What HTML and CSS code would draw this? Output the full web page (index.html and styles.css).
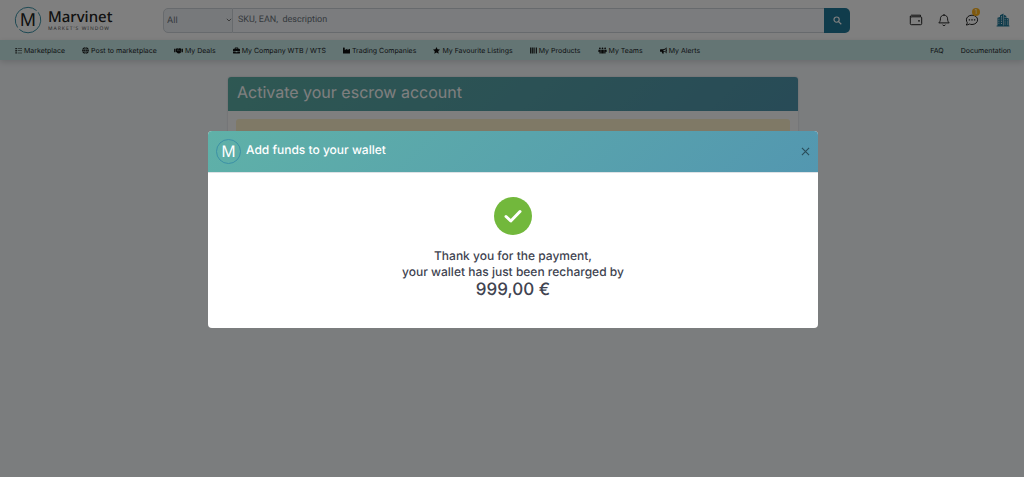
FILE: index.html
```html
<!DOCTYPE html>
<html lang="en">
<head>
<meta charset="utf-8">
<meta name="viewport" content="width=device-width, initial-scale=1">
<title>Marvinet</title>
<link rel="stylesheet" href="styles.css">
</head>
<body>
<header class="topbar">
  <a class="brand" href="#">
    <span class="brand-mark"><svg viewBox="0 0 28 28" aria-hidden="true"><path d="M3.6 21.5A12.8 12.8 0 0 1 22.6 4.6M24.2 6.3A12.8 12.8 0 0 1 5.4 23.5"/></svg><span class="brand-letter">M</span></span>
    <span class="brand-text"><span class="brand-name">Marvinet</span><span class="brand-tag">MARKET'S WINDOW</span></span>
  </a>
  <form class="search">
    <span class="search-scope">
      <select class="search-select" aria-label="Category"><option>All</option></select>
      <svg class="chevron" viewBox="0 0 8 8" aria-hidden="true"><path d="M1.8 2.8 4 5l2.2-2.2"/></svg>
    </span>
    <input class="search-input" type="text" aria-label="Search" placeholder="SKU, EAN,&nbsp; description">
    <button class="search-button" type="button" aria-label="Search"><svg viewBox="0 0 10 10"><circle cx="4" cy="4" r="2.9"/><path d="m6.2 6.2 3 3"/></svg></button>
  </form>
  <div class="tools">
    <button class="tool" type="button" aria-label="Wallet"><svg viewBox="0 0 14 14"><path d="M11.5 3.6V2.2H2.4a1.1 1.1 0 0 0 0 2M1.3 3v7.7c0 .6.4 1 1 1h9.4c.6 0 1-.4 1-1V4.8c0-.6-.4-1-1-1H2.4"/><circle class="solid" cx="10" cy="7.8" r=".9"/></svg></button>
    <button class="tool" type="button" aria-label="Notifications"><svg viewBox="0 0 14 14"><path d="M7 1v1.2M7 2.2c-2.3 0-3.6 1.6-3.6 3.6 0 2.5-.8 3.2-1.6 4.1h10.4c-.8-.9-1.6-1.6-1.6-4.1 0-2-1.3-3.6-3.6-3.6zM5.6 11.7c.4 1.2 2.4 1.2 2.8 0"/></svg></button>
    <button class="tool" type="button" aria-label="Messages"><svg viewBox="0 0 14 14"><path d="M7 2.200c3.100 0 5.600 2 5.600 4.600s-2.500 4.700-5.600 4.700c-.9 0-1.800-.2-2.600-.5-.9.6-1.900 1-3.200 1 .6-.7 1.100-1.600 1.100-2.300C1.700 8.900 1.400 7.900 1.400 6.800 1.400 4.200 3.900 2.200 7 2.200z"/><path class="solid" d="M3.700 6.200h1.400v1.300H3.700zM6.300 6.200h1.400v1.300H6.300zM8.900 6.200h1.400v1.300H8.900z"/></svg><span class="badge">1</span></button>
    <button class="tool tool-company" type="button" aria-label="Company"><svg viewBox="0 0 14 14"><path class="solid" fill-rule="evenodd" d="M1 12.600h.5V4.800l2.500-.9V2.300L7.500.6v12H8V1.700l2.300 1.200v1.900l2.500.6v7.200h.6v.9H.6v-.9zM2.500 5.800v1h.8v-1zm0 2v1h.8v-1zm0 2v1h.8v-1zM5 3.300v1.100h.9V3.300zm0 2.200v1.100h.9V5.500zm0 2.200v1.100h.9V7.700zm0 2.200V11h.9V9.900zM8.700 4v1h.8V4zm0 2.200v1h.8v-1zm0 2.200v1h.8v-1zm0 2.200v1h.8v-1zM11 6.200v1h.8v-1zm0 2.200v1h.8v-1zm0 2.200v1h.8v-1z"/></svg></button>
  </div>
</header>
<nav class="menu">
  <a href="#"><svg class="ic" viewBox="0 0 16 16"><path d="M1 2h3v3H1zM1 7h3v3H1zM1 12h3v3H1zM6 3h10v1H6zM6 8h10v1H6zM6 13h10v1H6z"/></svg>Marketplace</a>
  <a href="#"><svg class="ic" viewBox="0 0 16 16"><circle cx="8" cy="8" r="7.500"/><path class="cut" d="M.5 5.500h15M.5 10.500h15M8 .5v15M8 .5c-5 4-5 11 0 15M8 .5c5 4 5 11 0 15"/></svg>Post to marketplace</a>
  <a href="#"><svg class="ic ic-wide" viewBox="0 0 20 16"><path d="M0 4h3v8H0zM17 4h3v8h-3zM4 4l3-1 3 1-3 3c1 2 3 1 4 0l5 4-1 2-2 1-2 1-3-1-4-3H4zM11 3h3l2 1v6l-5-4-2 1-1-1z"/></svg>My Deals</a>
  <a href="#"><svg class="ic" viewBox="0 0 16 16"><path fill-rule="evenodd" d="M4 4V2q0-1 1-1h6q1 0 1 1v2h2q2 0 2 2v3H0V6q0-2 2-2zm2 0h4V3H6zM0 10h6v2h4v-2h6v3q0 2-2 2H2q-2 0-2-2z"/></svg>My Company WTB / WTS</a>
  <a href="#"><svg class="ic" viewBox="0 0 16 16"><path d="M0 2q0-1 1-1h2q1 0 1 1v5l6-3v3l6-3v10q0 1-1 1H1q-1 0-1-1z"/></svg>Trading Companies</a>
  <a href="#"><svg class="ic" viewBox="0 0 16 16"><path d="m8 0 2.400 5 5.600.8-4 4 1 5.700-5-2.700-5 2.700 1-5.700-4-4L5.600 5z"/></svg>My Favourite Listings</a>
  <a href="#"><svg class="ic" viewBox="0 0 16 16"><path d="M0 1h2v14H0zM3 1h1v14H3zM5 1h2v14H5zM8 1h1v14H8zM10 1h2v14h-2zM14 1h2v14h-2z"/></svg>My Products</a>
  <a href="#"><svg class="ic ic-wide" viewBox="0 0 20 16"><circle cx="4" cy="3" r="2"/><circle cx="10" cy="3" r="2"/><circle cx="16" cy="3" r="2"/><path d="M1 6h5v9H3v-4H0zM7 6h6v9H7zM14 6h5l1 5h-3v4h-3z"/></svg>My Teams</a>
  <a href="#"><svg class="ic" viewBox="0 0 16 16"><path fill-rule="evenodd" d="M1 5h6c3 0 6-2 7-4h1v5q2 1 0 3v5h-1c-1-2-3-3-6-3l1 4H5l-1-4H1q-1 0-1-1V6q0-1 1-1zm7 2v2c2 0 4 1 5 2V4c-1 2-3 3-5 3z"/></svg>My Alerts</a>
  <span class="menu-end"><a href="#">FAQ</a><a href="#">Documentation</a></span>
</nav>
<main class="page">
  <section class="card">
    <h1 class="card-title">Activate your escrow account</h1>
    <div class="card-body"><div class="notice"></div></div>
  </section>
</main>
<div class="backdrop">
  <div class="modal" role="dialog" aria-modal="true" aria-labelledby="modal-title">
    <div class="modal-head">
      <span class="modal-mark">M</span>
      <h2 class="modal-title" id="modal-title">Add funds to your wallet</h2>
      <button class="close" type="button" aria-label="Close"><svg viewBox="0 0 10 10"><path d="m1 1 8 8M9 1 1 9"/></svg></button>
    </div>
    <div class="modal-body">
      <svg class="check" viewBox="0 0 38 38" aria-hidden="true"><circle cx="19" cy="19" r="19"/><path d="m12 19.500 4.800 4.500 9.200-9.500"/></svg>
      <p class="message">Thank you for the payment,<br>your wallet has just been recharged by</p>
      <p class="amount">999,00 €</p>
    </div>
  </div>
</div>
</body>
</html>
```
FILE: styles.css
```css
* { box-sizing: border-box; }
body {
  margin: 0;
  min-height: 100vh;
  background: #f7fafd;
  color: #212529;
  font-family: Inter, "Liberation Sans", sans-serif;
  font-size: 7px;
  text-rendering: geometricPrecision;
}
h1, h2, p { margin: 0; font-weight: 500; }
a { color: inherit; text-decoration: none; }
button { border: 0; padding: 0; background: none; color: inherit; font: inherit; }
svg { display: block; }

.topbar {
  display: flex;
  align-items: center;
  height: 40px;
  padding: 0 14px;
  background: #fff;
}
.brand { display: flex; align-items: center; gap: 6px; width: 149px; }
.brand-mark { display: grid; place-items: center; width: 28px; height: 28px; }
.brand-mark > * { grid-area: 1 / 1; }
.brand-mark svg { width: 28px; height: 28px; fill: none; stroke: #3c93a8; stroke-width: 1; }
.brand-letter { font-family: "Noto Sans", sans-serif; font-size: 18px; line-height: 28px; color: #222; }
.brand-text { display: flex; flex-direction: column; }
.brand-name { font-family: "Noto Sans", sans-serif; font-size: 15px; font-weight: 500; line-height: 18px; color: #222; }
.brand-tag { font-family: "Noto Sans", sans-serif; font-size: 5px; line-height: 6px; letter-spacing: 1px; color: #555; white-space: nowrap; }

.search { display: flex; flex: 1; height: 25px; }
.search-scope { display: grid; width: 70px; }
.search-scope > * { grid-area: 1 / 1; }
.search-select {
  appearance: none;
  padding: 0 3px;
  border: 1px solid #ced4da;
  border-radius: 5px 0 0 5px;
  background: #eff2f6;
  color: #6c757d;
  font: 9px Inter, sans-serif;
  text-rendering: inherit;
}
.chevron { justify-self: end; align-self: center; width: 8px; height: 8px; fill: none; stroke: #777; pointer-events: none; }
.search-input {
  flex: 1;
  min-width: 0;
  padding: 0 5px;
  border: solid #ced4da;
  border-width: 1px 0;
  background: #f7f9fd;
  font: 9px Roboto, sans-serif;
  text-rendering: inherit;
}
.search-input::placeholder { color: #6c757d; opacity: 1; }
.search-button { display: grid; place-items: center; width: 26px; border-radius: 0 5px 5px 0; background: #217998; }
.search-button svg { width: 9px; height: 9px; fill: none; stroke: #fff; stroke-width: 1.300; }
.tools { display: flex; gap: 14px; padding-left: 59px; }
.tool { position: relative; width: 14px; height: 14px; }
.tool svg { width: 14px; height: 14px; fill: none; stroke: #222; stroke-linejoin: round; }
.tool .solid { fill: #222; stroke: none; }
.tool-company { margin-left: 3px; }
.tool-company .solid { fill: #217998; }
.badge {
  position: absolute;
  top: -5px;
  right: -1px;
  width: 8px;
  height: 8px;
  border-radius: 50%;
  background: #ffb31a;
  color: #fff;
  font-size: 6px;
  line-height: 8px;
  text-align: center;
}

.menu {
  display: flex;
  align-items: center;
  gap: 17px;
  height: 20px;
  padding: 0 13px 0 15px;
  background: #c9ebe8;
  box-shadow: 0 2px 6px rgba(0, 0, 0, .15);
  white-space: nowrap;
}
.menu a { display: flex; align-items: center; gap: 2px; }
.ic { width: 7px; height: 7px; fill: #111; }
.ic-wide { width: 9px; }
.cut { fill: none; stroke: #c9ebe8; stroke-width: 1; }
.menu-end { display: flex; gap: 17px; margin-left: auto; }

.page { padding: 17px 16px 16px 18px; }
.card { max-width: 570px; margin: 0 auto; border-radius: 3px; background: #fff; box-shadow: 0 0 2px rgba(0, 0, 0, .2); }
.card-title {
  padding: 0 9px 4px;
  border-radius: 3px 3px 0 0;
  background: linear-gradient(135deg, #5db0a6, #5096ae);
  color: #fff;
  font-size: 16px;
  font-weight: 400;
  line-height: 30px;
}
.card-body { padding: 8px; }
.notice { height: 48px; border-radius: 3px; background: #fff3cd; }

.backdrop {
  position: fixed;
  inset: 0;
  display: flex;
  align-items: flex-start;
  justify-content: center;
  padding: 131px 16px 16px 18px;
  background: rgba(0, 0, 0, .5);
}
.modal { width: 100%; max-width: 610px; border-radius: 4px; overflow: hidden; background: #fff; }
.modal-head {
  display: flex;
  align-items: center;
  gap: 5px;
  padding: 8px;
  border-bottom: 1px solid #dee2e6;
  background: linear-gradient(135deg, #5fb1a8, #5397b0);
  color: #fff;
}
.modal-mark {
  width: 25px;
  height: 25px;
  border: 1px solid #3c91a6;
  border-radius: 50%;
  font: 16px/23px "Noto Sans", sans-serif;
  text-align: center;
}
.modal-title { align-self: flex-start; font-size: 12px; line-height: 22px; }
.close { width: 9px; height: 9px; margin-left: auto; }
.close svg { width: 9px; height: 9px; fill: none; stroke: #2a4c58; stroke-width: 1.200; }
.modal-body { padding: 24px 16px 28px; color: #404350; text-align: center; }
.check { width: 38px; height: 38px; margin: 0 auto 13px; fill: #72b83c; }
.check path { fill: none; stroke: #fff; stroke-width: 3; stroke-linecap: round; stroke-linejoin: round; }
.message { font-size: 12px; line-height: 16px; }
.amount { font-size: 17px; line-height: 20px; }
```
